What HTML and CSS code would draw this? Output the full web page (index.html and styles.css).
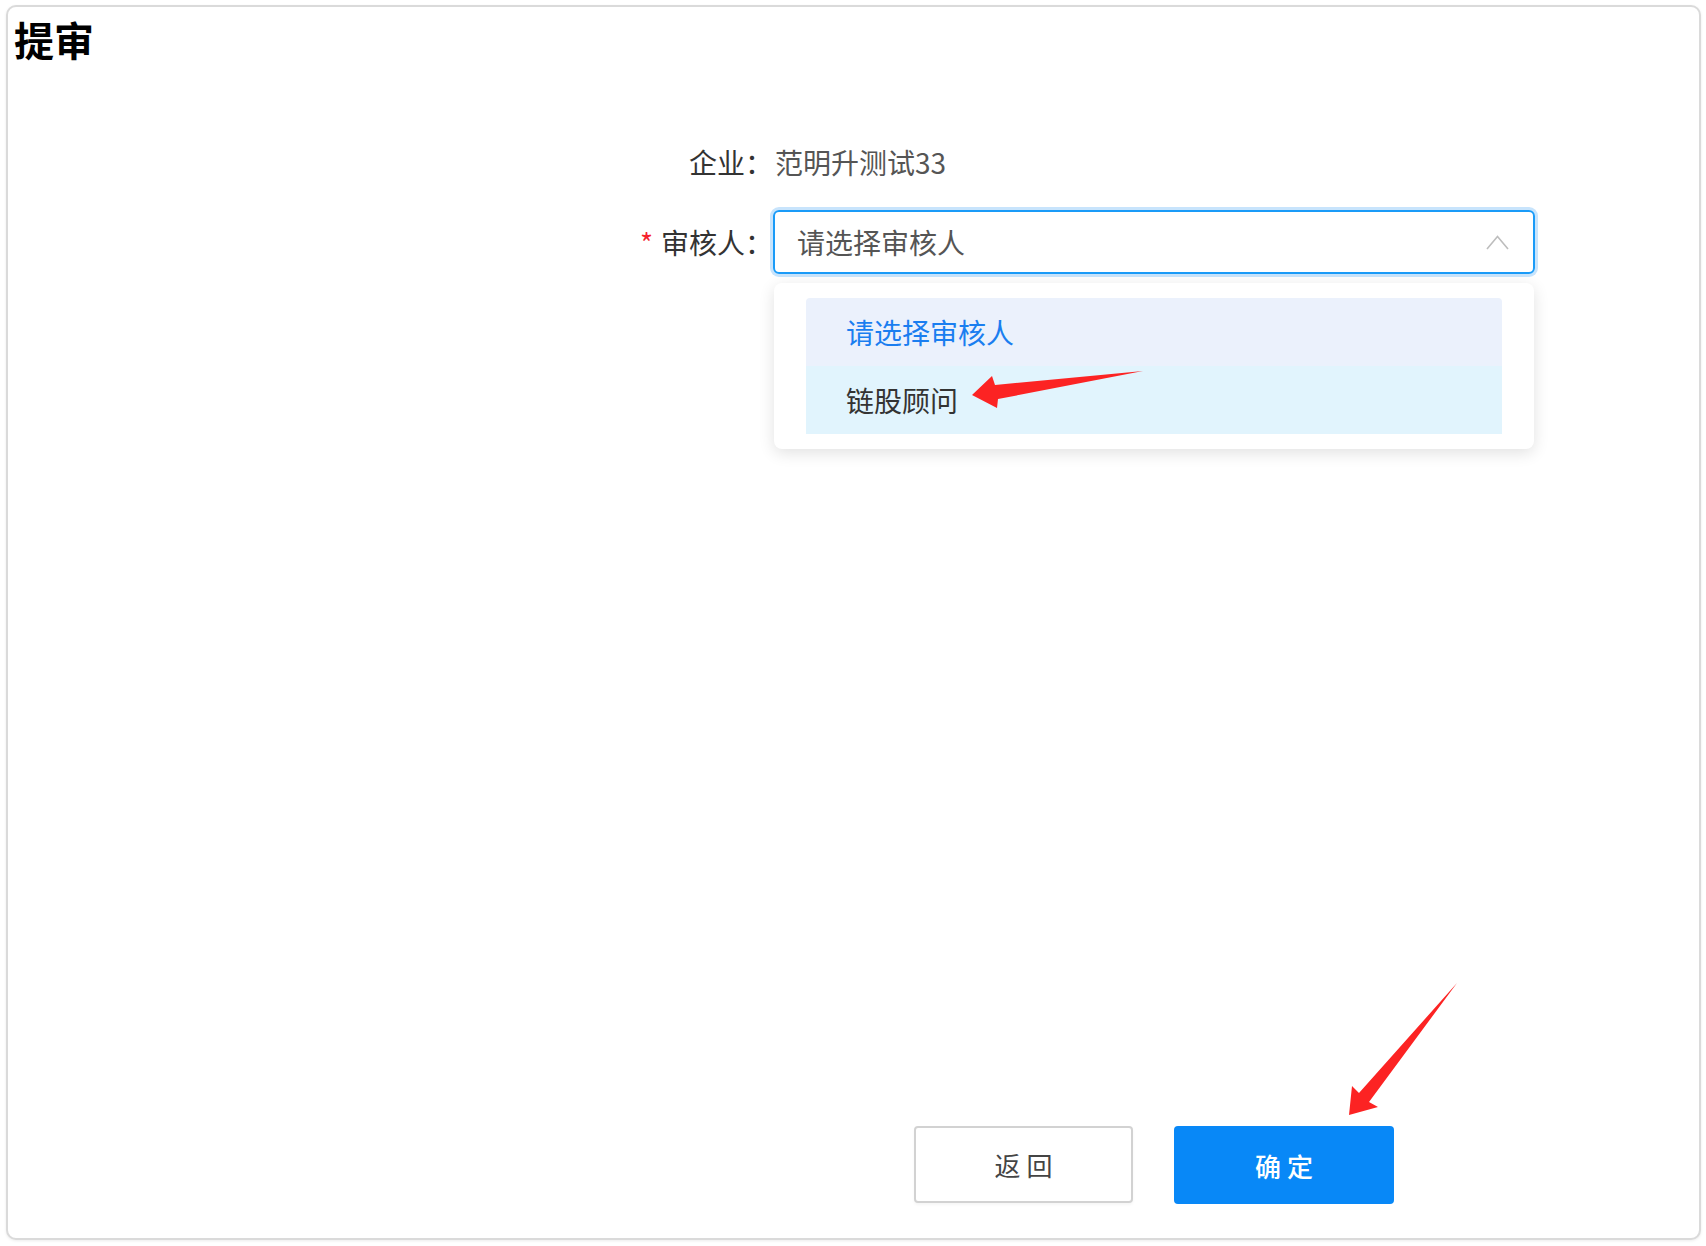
FILE: index.html
```html
<!DOCTYPE html>
<html lang="zh-CN">
<head>
<meta charset="utf-8">
<title>提审</title>
<link rel="stylesheet" href="styles.css">
</head>
<body>
<div class="window">
  <h1 class="title">提审</h1>
  <div class="form">
    <div class="row">
      <div class="label">企业：</div>
      <div class="value">范明升测试33</div>
    </div>
    <div class="row">
      <div class="label"><span class="req">*</span>审核人：</div>
      <div class="select-wrap">
        <div class="select">
          <span class="placeholder">请选择审核人</span>
          <svg class="caret" width="23" height="15" viewBox="0 0 23 15"><polyline points="1,14 11.5,1.5 22,14" fill="none" stroke="#bdbdbd" stroke-width="1.6"/></svg>
        </div>
        <div class="dropdown">
          <div class="option selected">请选择审核人</div>
          <div class="option hovered">链股顾问</div>
        </div>
      </div>
    </div>
  </div>
  <div class="spacer"></div>
  <div class="actions">
    <button class="btn btn-default">返 回</button>
    <button class="btn btn-primary">确 定</button>
  </div>
</div>
<svg class="annot" width="1706" height="1246" viewBox="0 0 1706 1246">
  <polygon points="972,395 992,376 995,385 1143,371 998,399 997,408" fill="#fc2323"/>
  <polygon points="1349,1115 1352,1086 1359,1093 1457,983 1369,1102 1378,1107" fill="#fc2323"/>
</svg>
</body>
</html>
```

FILE: styles.css
```css
* { box-sizing: border-box; }
html, body { margin: 0; padding: 0; background: #ffffff; }
body {
  position: relative;
  width: 1706px;
  height: 1246px;
  overflow: hidden;
  font-family: "Noto Sans CJK SC", "Noto Sans", sans-serif;
  color: #333;
}
.window {
  margin: 5px 0 0 6px;
  width: 1695px;
  height: 1235px;
  border: 2px solid #dadada;
  border-radius: 10px;
  box-shadow: 0 1px 3px rgba(0,0,0,0.08);
  background: #fff;
  display: flex;
  flex-direction: column;
}
.title {
  margin: 0;
  padding: 8px 0 0 6px;
  font-size: 40px;
  line-height: 48px;
  font-weight: 700;
  color: #000;
}
.form {
  margin-top: 67px;
  display: flex;
  flex-direction: column;
  gap: 16px;
}
.row {
  display: flex;
  align-items: center;
  height: 64px;
}
.label {
  width: 765px;
  text-align: right;
  font-size: 28px;
  line-height: 64px;
  color: #333;
}
.req {
  color: #f5222d;
  margin-right: 8px;
}
.value {
  font-size: 28px;
  line-height: 64px;
  color: #555;
  padding-left: 2px;
}
.select-wrap {
  position: relative;
  width: 762px;
}
.select {
  height: 64px;
  border: 2px solid #1a9bf8;
  border-radius: 6px;
  box-shadow: 0 0 0 3px #c8e4fc;
  display: flex;
  align-items: center;
  justify-content: space-between;
  padding: 0 24px 0 22px;
}
.placeholder {
  font-size: 28px;
  color: #555;
}
.caret { display: block; }
.dropdown {
  position: absolute;
  top: calc(100% + 9px);
  left: 1px;
  width: 760px;
  background: #fff;
  border-radius: 8px;
  box-shadow: 0 4px 16px rgba(0,0,0,0.12);
  padding: 15px 32px;
  z-index: 2;
}
.option {
  height: 68px;
  line-height: 68px;
  padding-left: 40px;
  font-size: 28px;
}
.option.selected {
  background: #ebf1fc;
  color: #1a7ef0;
  border-radius: 4px 4px 0 0;
}
.option.hovered {
  background: #e1f4fd;
  color: #333;
}
.spacer { flex: 1; }
.actions {
  display: flex;
  align-items: flex-start;
  gap: 41px;
  padding-left: 906px;
  margin-bottom: 34px;
}
.btn {
  width: 219px;
  height: 77px;
  font-family: "Noto Sans CJK SC", "Noto Sans", sans-serif;
  font-size: 26px;
  border-radius: 4px;
  padding: 0;
}
.btn-default {
  background: #fff;
  border: 2px solid #d2d2d2;
  color: #444;
  box-shadow: 0 2px 3px rgba(0,0,0,0.04);
}
.btn-primary {
  width: 220px;
  height: 78px;
  background: #0888f7;
  border: none;
  color: #fff;
  font-weight: 500;
}
.annot {
  position: absolute;
  left: 0;
  top: 0;
  z-index: 10;
  pointer-events: none;
}
```
